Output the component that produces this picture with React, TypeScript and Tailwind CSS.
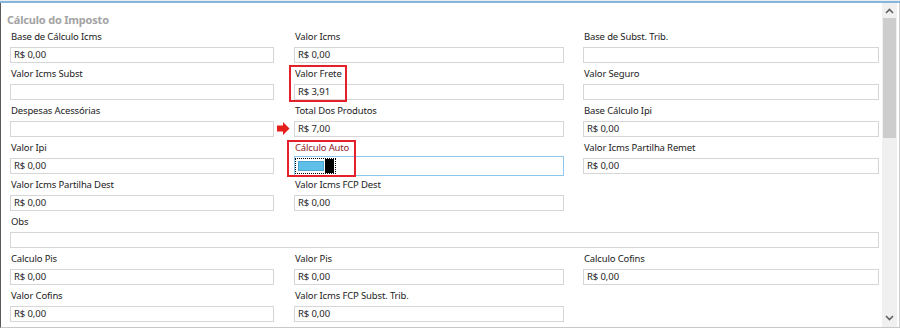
import React from 'react'

type Field = {
  label: string
  value?: string
  kind?: 'frete' | 'total' | 'auto'
}

const font = { fontFamily: '"Noto Sans", "Open Sans", sans-serif' }

function Input({ value, w }: { value?: string; w: string }) {
  return (
    <div className={`${w} h-[16px] border border-[#d6d6d6] bg-white flex items-center pl-[3px] text-[9.5px] tracking-[-0.1px] text-[#1e1e1e] leading-none`}>
      {value}
    </div>
  )
}

function Toggle({ w }: { w: string }) {
  return (
    <div className={`${w} h-[20px] -mt-[2px] -mb-[2px] border border-[#8cc8ee] bg-white flex items-center`}>
      <div className="w-[41px] h-[16px] border border-dotted border-black flex items-center pl-[2px]">
        <div className="w-[26px] h-[10px] bg-[#5fbfe9] border border-[#4aa6d2]" />
        <div className="w-[9px] h-[14px] bg-black ml-[1px]" />
      </div>
    </div>
  )
}

function Cell({ f, cw, iw }: { f?: Field; cw: string; iw: string }) {
  if (!f) return <div className={cw} />
  return (
    <div className={`${cw} relative flex flex-col`}>
      <div
        className={`h-[21px] flex items-center pl-[1px] text-[9.5px] tracking-[-0.15px] leading-none ${
          f.kind === 'auto' ? 'text-[#8e2323]' : 'text-[#222]'
        }`}
      >
        {f.label}
      </div>
      {f.kind === 'auto' ? <Toggle w={iw} /> : <Input value={f.value} w={iw} />}
      {f.kind === 'frete' && (
        <div className="absolute left-[-5px] top-[2px] w-[58px] h-[37px] border-2 border-[#e3202b]" />
      )}
      {f.kind === 'auto' && (
        <div className="absolute left-[-7px] top-[3px] w-[69px] h-[37px] border-2 border-[#e3202b]" />
      )}
      {f.kind === 'total' && (
        <svg className="absolute left-[-17px] top-[22px]" width="13" height="13" viewBox="0 0 13 13">
          <path d="M0 3.5 H6 V0 L12.5 6.5 L6 13 V9.5 H0 Z" fill="#e5201c" />
        </svg>
      )}
    </div>
  )
}

const rows: (Field | undefined)[][] = [
  [
    { label: 'Base de Cálculo Icms', value: 'R$ 0,00' },
    { label: 'Valor Icms', value: 'R$ 0,00' },
    { label: 'Base de Subst. Trib.' },
  ],
  [
    { label: 'Valor Icms Subst' },
    { label: 'Valor Frete', value: 'R$ 3,91', kind: 'frete' },
    { label: 'Valor Seguro' },
  ],
  [
    { label: 'Despesas Acessórias' },
    { label: 'Total Dos Produtos', value: 'R$ 7,00', kind: 'total' },
    { label: 'Base Cálculo Ipi', value: 'R$ 0,00' },
  ],
  [
    { label: 'Valor Ipi', value: 'R$ 0,00' },
    { label: 'Cálculo Auto', kind: 'auto' },
    { label: 'Valor Icms Partilha Remet', value: 'R$ 0,00' },
  ],
  [
    { label: 'Valor Icms Partilha Dest', value: 'R$ 0,00' },
    { label: 'Valor Icms FCP Dest', value: 'R$ 0,00' },
    undefined,
  ],
]

const rowsAfter: (Field | undefined)[][] = [
  [
    { label: 'Calculo Pis', value: 'R$ 0,00' },
    { label: 'Valor Pis', value: 'R$ 0,00' },
    { label: 'Calculo Cofins', value: 'R$ 0,00' },
  ],
  [
    { label: 'Valor Cofins', value: 'R$ 0,00' },
    { label: 'Valor Icms FCP Subst. Trib.', value: 'R$ 0,00' },
    undefined,
  ],
]

function Row({ cells }: { cells: (Field | undefined)[] }) {
  return (
    <div className="flex">
      <Cell f={cells[0]} cw="w-[284px]" iw="w-[264px]" />
      <Cell f={cells[1]} cw="w-[289px]" iw="w-[270px]" />
      <Cell f={cells[2]} cw="w-[296px]" iw="w-[296px]" />
    </div>
  )
}

export default function App() {
  return (
    <div className="w-[900px] h-[328px] bg-white overflow-hidden" style={font}>
      <div className="h-[1px] bg-[#e8eef3]" />
      <div className="h-[2px] bg-[#86b6dc]" />
      <div className="flex h-[325px] border-l border-l-[#5a5a5a] border-r border-r-[#cfcfcf] border-b border-b-[#c8c8c8]">
        <div className="flex-1 flex flex-col pl-[9px]">
          <div className="h-[23px] flex items-end -ml-[3px] text-[11px] tracking-[-0.2px] font-bold text-[#a3a3a3] leading-none pb-[1px]">
            Cálculo do Imposto
          </div>
          {rows.map((r, i) => (
            <Row key={i} cells={r} />
          ))}
          <div className="flex flex-col">
            <div className="h-[21px] flex items-center pl-[1px] text-[9.5px] tracking-[-0.15px] leading-none text-[#222]">Obs</div>
            <Input w="w-[869px]" />
          </div>
          {rowsAfter.map((r, i) => (
            <Row key={i} cells={r} />
          ))}
        </div>
        <div className="w-[15px] mr-[2px] bg-[#f0f0f0] flex flex-col items-center">
          <svg className="mt-[5px]" width="9" height="6" viewBox="0 0 9 6">
            <path d="M1 5 L4.5 1.5 L8 5" stroke="#606060" strokeWidth="1.6" fill="none" />
          </svg>
          <div className="mt-[4px] w-[13px] h-[120px] bg-[#cdcdcd]" />
          <div className="flex-1" />
          <svg className="mb-[6px]" width="9" height="6" viewBox="0 0 9 6">
            <path d="M1 1 L4.5 4.5 L8 1" stroke="#606060" strokeWidth="1.6" fill="none" />
          </svg>
        </div>
      </div>
    </div>
  )
}
